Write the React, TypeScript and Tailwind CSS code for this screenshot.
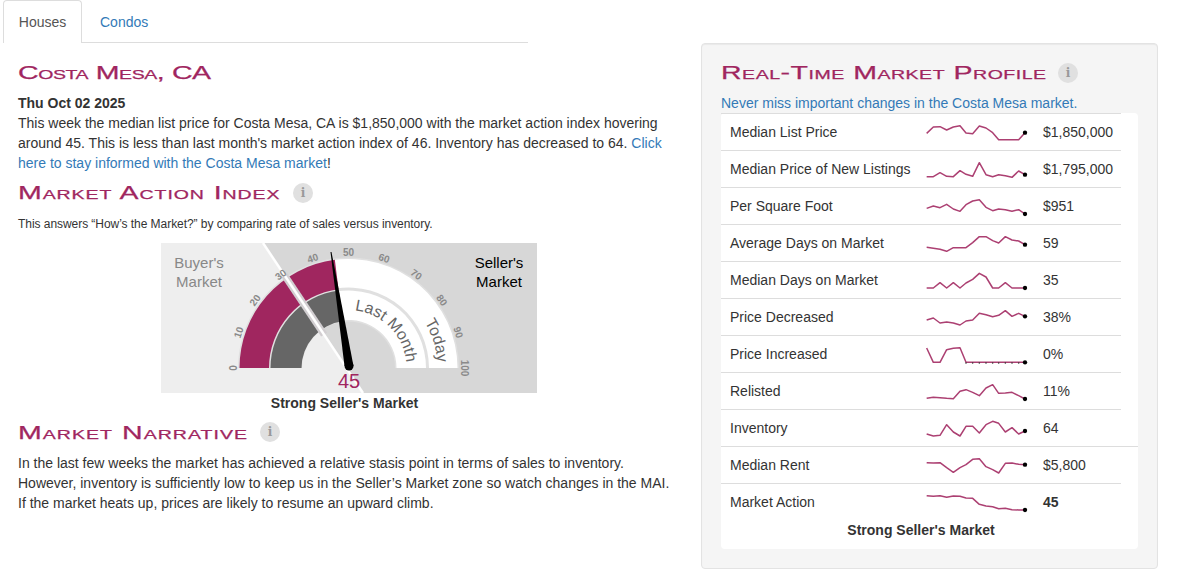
import type { ReactNode } from "react";

const BERRY = "#a0265f";

const xs = [20, 40, 60, 80, 100, 120, 138, 158, 178, 198, 218, 236, 256, 276, 296, 315];

const rows = [
  { label: "Median List Price", value: "$1,850,000", ys: [58, 39, 38, 48, 39, 35, 57, 59, 36, 42, 56, 77, 77, 77, 77, 56] },
  { label: "Median Price of New Listings", value: "$1,795,000", ys: [77, 77, 65, 76, 77, 59, 70, 76, 35, 71, 77, 71, 74, 79, 60, 71] },
  { label: "Per Square Foot", value: "$951", ys: [61, 54, 59, 49, 63, 70, 50, 39, 35, 58, 68, 63, 65, 70, 65, 78] },
  { label: "Average Days on Market", value: "59", ys: [67, 70, 73, 79, 68, 68, 68, 53, 35, 35, 47, 54, 35, 45, 48, 59] },
  { label: "Median Days on Market", value: "35", ys: [78, 78, 62, 78, 62, 78, 63, 52, 34, 45, 78, 78, 62, 78, 78, 78] },
  { label: "Price Decreased", value: "38%", ys: [63, 57, 72, 69, 72, 78, 66, 63, 43, 47, 53, 49, 35, 52, 43, 52] },
  { label: "Price Increased", value: "0%", zero: true, ys: [36, 79, 79, 41, 37, 35, 79, 79, 79, 79, 79, 79, 79, 79, 79, 79] },
  { label: "Relisted", value: "11%", ys: [76, 73, 74, 76, 77, 55, 50, 58, 68, 45, 35, 61, 60, 58, 68, 78] },
  { label: "Inventory", value: "64", ys: [72, 78, 76, 44, 66, 78, 49, 49, 69, 44, 34, 40, 66, 53, 72, 63] },
  { label: "Median Rent", value: "$5,800", ys: [47, 48, 47, 62, 76, 62, 53, 37, 35, 59, 68, 78, 49, 48, 52, 53] },
  { label: "Market Action", value: "45", bold: true, ys: [35, 37, 35, 40, 36, 37, 42, 43, 61, 66, 68, 74, 73, 77, 78, 78] },
];

function Spark({ ys, zero }: { ys: number[]; zero?: boolean }) {
  const pts = ys.map((y, i) => `${xs[i]},${y}`).join(" ");
  return (
    <svg width="120" height="37" viewBox="0 0 360 111" className="block shrink-0" aria-hidden="true">
      <polyline points={pts} fill="none" stroke={BERRY} strokeWidth="4.5" strokeLinejoin="round" opacity="0.88" />
      {zero && xs.slice(6, 15).map((x) => <circle key={x} cx={x} cy={81} r="2.4" fill="#333" />)}
      <circle cx={xs[15]} cy={ys[15]} r="6.5" fill="#000" />
    </svg>
  );
}

function Heading({
  width,
  tracking,
  badgeGap,
  className,
  children,
}: {
  width: string;
  tracking: string;
  badgeGap?: string;
  className?: string;
  children: ReactNode;
}) {
  return (
    <h2 className={`flex h-[22px] items-center ${className ?? ""}`}>
      <span
        className={`${width} ${tracking} inline-block shrink-0 origin-left scale-x-[1.5] text-[19px] leading-[22px] font-normal whitespace-nowrap text-[#a0265f] [font-variant:small-caps] [-webkit-text-stroke:0.25px_#a0265f]`}
      >
        {children}
      </span>
      {badgeGap && (
        <span
          className={`${badgeGap} inline-grid size-5 shrink-0 place-items-center rounded-full bg-[#e0e0e0] font-['DejaVu_Serif',serif] text-[12px] leading-none font-bold text-[#999]`}
        >
          i
        </span>
      )}
    </h2>
  );
}

function polar(r: number, deg: number) {
  // 0 = left end of the dial, 100 = right end
  const a = Math.PI - (deg / 100) * Math.PI;
  return [348.5 + r * Math.cos(a), 368 - r * Math.sin(a)];
}

function band(r1: number, r2: number, from: number, to: number) {
  const [ax, ay] = polar(r1, from);
  const [bx, by] = polar(r1, to);
  const [cx, cy] = polar(r2, to);
  const [dx, dy] = polar(r2, from);
  return `M${ax} ${ay}A${r1} ${r1} 0 0 1 ${bx} ${by}L${cx} ${cy}A${r2} ${r2} 0 0 0 ${dx} ${dy}Z`;
}

const ticks = [0, 10, 20, 30, 40, 50, 60, 70, 80, 90, 100];
const gaugeFont = "'Liberation Sans', sans-serif";

function Gauge() {
  return (
    <svg width="376" height="150" viewBox="161 243 376 150" className="block" aria-hidden="true">
      <rect x="161" y="243" width="376" height="150" fill="#d7d7d7" />
      <polygon points="161,243 263,243 363,393 161,393" fill="#eeeeee" />
      <path d={band(110.5, 46.5, 0, 100)} fill="#e0e0e0" />
      <path d={band(109, 80.5, 45, 100)} fill="#fff" />
      <path d={band(77.5, 48, 45, 100)} fill="#fff" />
      <path d={band(109, 79.5, 0, 46)} fill={BERRY} />
      <path d={band(78, 47, 0, 46)} fill="#666" />
      <line x1="284.5" y1="275.2" x2="324" y2="334.5" stroke="#d2ced1" strokeWidth="7" />
      <line x1="263" y1="243" x2="363" y2="393" stroke="#fff" strokeWidth="2.5" />
      <polygon points="330.5,252 331.5,252 353.5,366 344.5,366" fill="#000" />
      <circle cx="349" cy="366" r="4.5" fill="#000" />
      {ticks.map((t) => {
        const [x, y] = polar(115.5, t);
        const rot = (t / 100) * 180 - 90;
        return (
          <text
            key={t}
            x={x}
            y={y}
            transform={`rotate(${rot} ${x} ${y})`}
            textAnchor="middle"
            dominantBaseline="central"
            fontSize="10"
            fontWeight="700"
            fontFamily={gaugeFont}
            fill="#8a8a8a"
          >
            {t}
          </text>
        );
      })}
      <path id="lastMonthArc" d="M348.5 310A58 58 0 0 1 406.5 368" fill="none" />
      <path id="todayArc" d="M348.5 279A89 89 0 0 1 437.5 368" fill="none" />
      <text fontSize="16" fontFamily={gaugeFont} fill="#666" textAnchor="end">
        <textPath href="#lastMonthArc" startOffset="94%">Last Month</textPath>
      </text>
      <text fontSize="16" fontFamily={gaugeFont} fill="#666" textAnchor="end">
        <textPath href="#todayArc" startOffset="96%">Today</textPath>
      </text>
      <text x="199" y="268" textAnchor="middle" fontSize="15" fontFamily={gaugeFont} fill="#888">Buyer's</text>
      <text x="199" y="287" textAnchor="middle" fontSize="15" fontFamily={gaugeFont} fill="#888">Market</text>
      <text x="499" y="268" textAnchor="middle" fontSize="15" fontFamily={gaugeFont} fill="#000">Seller's</text>
      <text x="499" y="287" textAnchor="middle" fontSize="15" fontFamily={gaugeFont} fill="#000">Market</text>
      <text x="349" y="388" textAnchor="middle" fontSize="20" fontFamily={gaugeFont} fill={BERRY}>45</text>
    </svg>
  );
}

export default function App() {
  return (
    <div className="flex h-[583px] w-[1186px] overflow-hidden bg-white font-['Liberation_Sans',Arial,sans-serif] text-[14px] leading-5 text-[#333]">
      <div className="ml-[3px] w-[525px] shrink-0">
        <nav className="flex h-[43px] border-b border-[#ddd]">
          <a className="h-[43px] w-[79px] rounded-t border border-b-0 border-[#ddd] bg-white pt-[11px] text-center text-[#555]">Houses</a>
          <a className="px-[18px] pt-[12px] text-[#337ab7]">Condos</a>
        </nav>
        <div className="w-[670px] pl-[15px]">
          <Heading width="w-[133px]" tracking="tracking-[-0.27px]" className="mt-[19px]">Costa Mesa, CA</Heading>
          <p className="mt-[9px] font-bold">Thu Oct 02 2025</p>
          <p>
            This week the median list price for Costa Mesa, CA is $1,850,000 with the market action index hovering
            <br />
            around 45. This is less than last month's market action index of 46. Inventory has decreased to 64.{" "}
            <span className="text-[#337ab7]">Click</span>
            <br />
            <span className="text-[#337ab7]">here to stay informed with the Costa Mesa market</span>!
          </p>
          <Heading width="w-[181px]" tracking="tracking-[0.62px]" badgeGap="ml-[94px]" className="mt-[9px]">Market Action Index</Heading>
          <p className="mt-[12px] text-[12px] leading-[17px] tracking-[-0.05px]">
            This answers “How’s the Market?” by comparing rate of sales versus inventory.
          </p>
          <div className="mt-[10px] ml-[143px] w-[376px]">
            <Gauge />
            <p className="mt-px pr-[9px] text-center text-[14px] leading-[18px] font-bold">Strong Seller's Market</p>
          </div>
          <Heading width="w-[160px]" tracking="tracking-[0.7px]" badgeGap="ml-[82px] -translate-y-px" className="mt-[10px]">Market Narrative</Heading>
          <p className="mt-[9px]">
            In the last few weeks the market has achieved a relative stasis point in terms of sales to inventory.
            However, inventory is sufficiently low to keep us in the Seller’s Market zone so watch changes in the MAI.
            If the market heats up, prices are likely to resume an upward climb.
          </p>
        </div>
      </div>
      <aside className="mt-[43px] ml-[173px] h-[526px] w-[457px] shrink-0 rounded border border-[#e3e3e3] bg-[#f5f5f5] pt-[18px] pl-[19px] shadow-[inset_0_1px_1px_rgba(0,0,0,0.05)]">
        <Heading width="w-[224px]" tracking="tracking-[0.35px]" badgeGap="ml-[113px]">Real-Time Market Profile</Heading>
        <p className="mt-[9px] text-[#337ab7]">Never miss important changes in the Costa Mesa market.</p>
        <div className="h-[436px] w-[417px] rounded-sm bg-white">
          {rows.map((row, i) => (
            <div
              key={row.label}
              className={`flex h-[37px] items-center border-t border-[#ddd] ${i === 9 ? "w-[417px]" : "w-[400px]"}`}
            >
              <span className="w-[179px] shrink-0 pl-[9px] whitespace-nowrap">{row.label}</span>
              <span className="w-[20px] shrink-0" />
              <Spark ys={row.ys} zero={row.zero} />
              <span className={`ml-[3px] ${row.bold ? "font-bold" : ""}`}>{row.value}</span>
            </div>
          ))}
          <p className="w-[400px] text-center font-bold">Strong Seller's Market</p>
        </div>
      </aside>
    </div>
  );
}
